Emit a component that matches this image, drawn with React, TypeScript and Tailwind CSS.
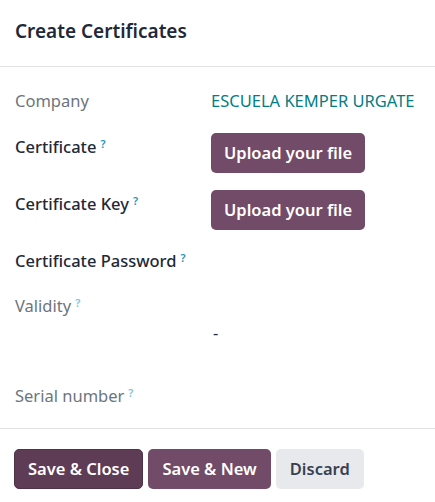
const Help = ({ muted }: { muted?: boolean }) => (
  <sup className={`ml-[4px] text-[11px] font-semibold ${muted ? "text-[#7fc4d8]" : "text-[#1b95b8]"}`}>?</sup>
);

const Label = ({ text, muted, help }: { text: string; muted?: boolean; help?: boolean }) => (
  <div className={`w-[196px] shrink-0 pt-[2px] leading-[24px] ${muted ? "text-[#6c757d]" : "text-[#1f2937] font-medium"}`}>
    {text}
    {help && <Help muted={muted} />}
  </div>
);

const UploadButton = () => (
  <button className="h-[40px] rounded-[5px] bg-[#714b67] px-[13px] text-[16.5px] font-semibold text-white">
    Upload your file
  </button>
);

export default function App() {
  return (
    <div className="w-[435px] h-[502px] bg-white text-[16.5px] font-['Noto_Sans',sans-serif]">
      <div className="h-[67px] flex items-center px-[15px] pb-[4px] border-b border-[#dee2e6]">
        <h1 className="text-[19px] font-semibold text-[#1f2937]">Create Certificates</h1>
      </div>

      <div className="px-[15px] pt-[20px] h-[362px] border-b border-[#dee2e6]">
        <div className="flex">
          <Label text="Company" muted />
          <div className="pt-[2px] leading-[24px] text-[#017e84]">ESCUELA KEMPER URGATE</div>
        </div>
        <div className="flex mt-[20px]">
          <Label text="Certificate" help />
          <UploadButton />
        </div>
        <div className="flex mt-[17px]">
          <Label text="Certificate Key" help />
          <UploadButton />
        </div>
        <div className="flex mt-[17px]">
          <Label text="Certificate Password" help />
        </div>
        <div className="flex mt-[19px]">
          <Label text="Validity" muted help />
        </div>
        <div className="flex mt-[3px]">
          <div className="w-[196px] shrink-0" />
          <div className="pl-[2px] leading-[24px] text-[#1f2937]">-</div>
        </div>
        <div className="flex mt-[37px]">
          <Label text="Serial number" muted help />
        </div>
      </div>

      <div className="flex gap-[5px] px-[14px] pt-[20px]">
        <button className="h-[40px] rounded-[5px] border border-[#4f3348] bg-[#5f3c55] px-[13px] text-[16.5px] font-semibold text-white">
          Save &amp; Close
        </button>
        <button className="h-[40px] rounded-[5px] bg-[#714b67] px-[14px] text-[16.5px] font-semibold text-white">
          Save &amp; New
        </button>
        <button className="h-[40px] rounded-[5px] bg-[#e7e9ed] px-[14px] text-[16.5px] font-semibold text-[#374151]">
          Discard
        </button>
      </div>
    </div>
  );
}
